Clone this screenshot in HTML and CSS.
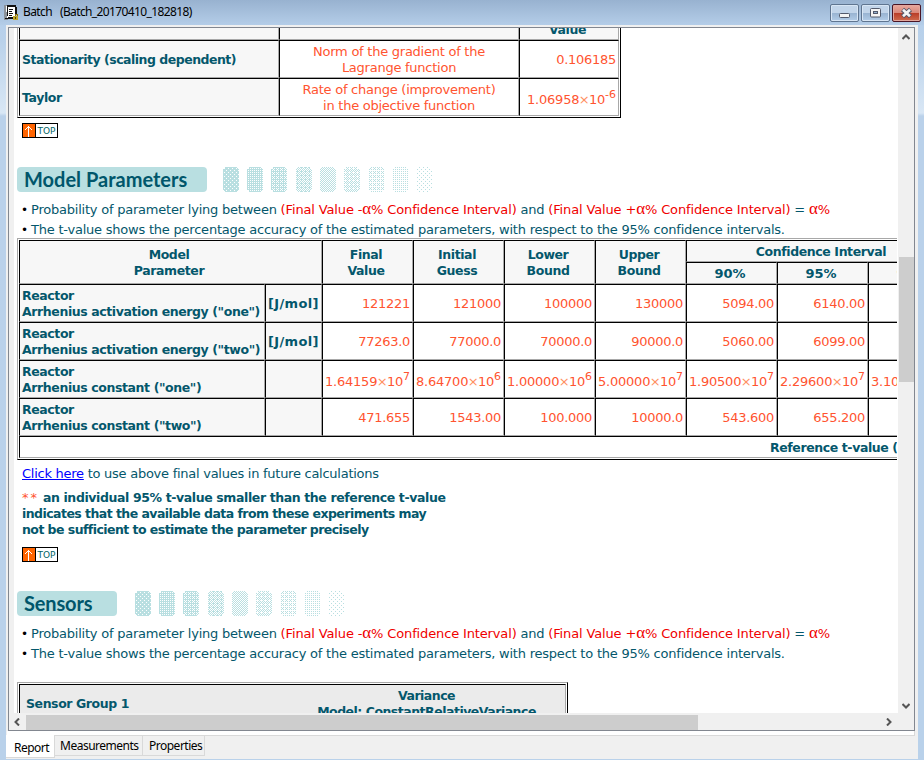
FILE: index.html
```html
<!DOCTYPE html>
<html lang="en">
<head>
<meta charset="utf-8">
<title>Batch (Batch_20170410_182818)</title>
<link rel="stylesheet" href="styles.css">
</head>
<body>
<div class="window">
  <header class="titlebar">
    <svg class="app-icon" width="16" height="16" viewBox="0 0 16 16" shape-rendering="crispEdges"><path d="M0 0h4v15H0z" fill="#8b929a"/><path d="M2 1h9v12H3z" fill="#fff"/><path d="M3 0h9v2h1v8h-2V2H4v9H3zM4 12h6v2H1v-1h3z" fill="#111"/><path d="M5 4h4v1H5zM5 6h3v1H5zM5 8h4v1H5zM5 10h3v1H5z" fill="#111"/><path d="M11 9h3v2h-1v-1h-1v1h-1z" fill="#876c0c"/><path d="M9 11h5v4H9z" fill="#bda52a"/><path d="M11 12h1v2h-1z" fill="#554700"/></svg>
    <span class="title"><span>Batch</span><span class="file">(Batch_20170410_182818)</span></span>
    <div class="buttons">
      <span class="btn"><svg width="27" height="16" viewBox="0 0 27 16"><rect x="8.5" y="8.5" width="10" height="4" rx="1" fill="#f4f4f4" stroke="#535a6b"/></svg></span>
      <span class="btn"><svg width="27" height="16" viewBox="0 0 27 16"><rect x="8.5" y="3.5" width="10" height="8.500" rx="1" fill="#f4f4f4" stroke="#535a6b"/><rect x="11.500" y="6.500" width="4" height="2" fill="#92afd0" stroke="#535a6b"/></svg></span>
      <span class="btn close"><svg width="27" height="16" viewBox="0 0 27 16"><path d="M9.500 4.500L17.500 11.500M17.500 4.500L9.500 11.500" stroke="#55576a" stroke-width="4.600"/><path d="M10 4.700L17 11.300M17 4.700L10 11.300" stroke="#f4f4f4" stroke-width="2.600"/></svg></span>
    </div>
  </header>
  <div class="client">
    <div class="frame">
      <main class="page">
        <table class="grid top-table">
          <colgroup><col class="w260"><col class="w240"><col class="w100"></colgroup>
          <tr class="r38"><th></th><th></th><th class="cut">Value</th></tr>
          <tr class="r38"><th class="l tight">Stationarity (scaling dependent)</th><td class="c">Norm of the gradient of the<br>Lagrange function</td><td>0.106185</td></tr>
          <tr class="r38"><th class="l">Taylor</th><td class="c">Rate of change (improvement)<br>in the objective function</td><td class="sci">1.06958<i>×</i>10<sup>-6</sup></td></tr>
        </table>
        <div class="top-link"><span class="arrow"><svg width="12" height="15" viewBox="0 0 12 15" shape-rendering="crispEdges"><path d="M6 3h1v11H6zM5 4h3v1H5zM4 5h1v1H4zM8 5h1v1H8zM3 6h1v1H3zM9 6h1v1H9z" fill="#fff"/><path d="M6 14h1v1H6z" fill="#000"/></svg></span><span class="word">TOP</span></div>

        <div class="heading h-model"><h2>Model Parameters</h2><div class="dots"></div></div>
        <p class="bullet"><b>•</b><span>Probability of parameter lying between </span><span class="red">(Final Value -<em>α</em>% Confidence Interval)</span><span> and </span><span class="red">(Final Value +<em>α</em>% Confidence Interval)</span><span> = </span><span class="red"><em>α</em>%</span></p>
        <p class="bullet"><b>•</b><span>The t-value shows the percentage accuracy of the estimated parameters, with respect to the 95% confidence intervals.</span></p>

        <table class="grid params">
          <colgroup><col class="w246"><col class="w57"><col class="w91"><col class="w91"><col class="w91"><col class="w91"><col class="w91"><col class="w91"><col class="w91"></colgroup>
          <tr class="r22"><th colspan="2" rowspan="2">Model<br>Parameter</th><th rowspan="2">Final<br>Value</th><th rowspan="2">Initial<br>Guess</th><th rowspan="2">Lower<br>Bound</th><th rowspan="2">Upper<br>Bound</th><th colspan="3">Confidence Interval</th></tr>
          <tr class="r22"><th class="wide">90%</th><th class="wide">95%</th><th class="wide">99%</th></tr>
          <tr class="r38"><th class="l">Reactor<br>Arrhenius activation energy ("one")</th><th class="l unit">[J/mol]</th><td>121221</td><td>121000</td><td>100000</td><td>130000</td><td>5094.00</td><td>6140.00</td><td>8290.00</td></tr>
          <tr class="r38"><th class="l">Reactor<br>Arrhenius activation energy ("two")</th><th class="l unit">[J/mol]</th><td>77263.0</td><td>77000.0</td><td>70000.0</td><td>90000.0</td><td>5060.00</td><td>6099.00</td><td>8230.00</td></tr>
          <tr class="r38"><th class="l">Reactor<br>Arrhenius constant ("one")</th><th></th><td class="sci">1.64159<i>×</i>10<sup>7</sup></td><td class="sci">8.64700<i>×</i>10<sup>6</sup></td><td class="sci">1.00000<i>×</i>10<sup>6</sup></td><td class="sci">5.00000<i>×</i>10<sup>7</sup></td><td class="sci">1.90500<i>×</i>10<sup>7</sup></td><td class="sci">2.29600<i>×</i>10<sup>7</sup></td><td class="sci">3.10000<i>×</i>10<sup>7</sup></td></tr>
          <tr class="r38"><th class="l">Reactor<br>Arrhenius constant ("two")</th><th></th><td>471.655</td><td>1543.00</td><td>100.000</td><td>10000.0</td><td>543.600</td><td>655.200</td><td>884.000</td></tr>
          <tr class="r22"><th colspan="9" class="ref">Reference t-value (95%):</th></tr>
        </table>
        <p class="click"><a href="#">Click here</a> to use above final values in future calculations</p>
        <p class="note"><span class="star">**</span><span class="first"> an individual 95% t-value smaller than the reference t-value</span><br>indicates that the available data from these experiments may<br>not be sufficient to estimate the parameter precisely</p>
        <div class="top-link"><span class="arrow"><svg width="12" height="15" viewBox="0 0 12 15" shape-rendering="crispEdges"><path d="M6 3h1v11H6zM5 4h3v1H5zM4 5h1v1H4zM8 5h1v1H8zM3 6h1v1H3zM9 6h1v1H9z" fill="#fff"/><path d="M6 14h1v1H6z" fill="#000"/></svg></span><span class="word">TOP</span></div>

        <div class="heading h-sensors"><h2>Sensors</h2><div class="dots"></div></div>
        <p class="bullet"><b>•</b><span>Probability of parameter lying between </span><span class="red">(Final Value -<em>α</em>% Confidence Interval)</span><span> and </span><span class="red">(Final Value +<em>α</em>% Confidence Interval)</span><span> = </span><span class="red"><em>α</em>%</span></p>
        <p class="bullet"><b>•</b><span>The t-value shows the percentage accuracy of the estimated parameters, with respect to the 95% confidence intervals.</span></p>
        <section class="group"><div class="group-in"><strong>Sensor Group 1</strong><strong class="var">Variance<br>Model: ConstantRelativeVariance</strong></div></section>
      </main>
      <div class="vscroll">
        <svg width="8" height="6" viewBox="0 0 8 6"><path d="M.5 5L4 1.500L7.500 5" fill="none" stroke="#555" stroke-width="2"/></svg>
        <div class="vthumb"></div>
        <svg width="8" height="6" viewBox="0 0 8 6"><path d="M.5 1L4 4.500L7.500 1" fill="none" stroke="#555" stroke-width="2"/></svg>
      </div>
      <div class="hscroll">
        <svg width="6" height="8" viewBox="0 0 6 8"><path d="M5 .5L1.500 4L5 7.500" fill="none" stroke="#555" stroke-width="2"/></svg>
        <div class="hthumb"></div>
        <svg width="6" height="8" viewBox="0 0 6 8"><path d="M1 .5L4.500 4L1 7.500" fill="none" stroke="#555" stroke-width="2"/></svg>
      </div>
    </div>
    <div class="edge"></div>
    <nav class="tabs"><span class="tab on">Report</span><span class="tab m">Measurements</span><span class="tab p">Properties</span></nav>
  </div>
</div>
<script src="page.js"></script>
</body>
</html>
```
FILE: styles.css
```css
* { box-sizing: border-box; }
html, body { margin: 0; }
body { width: 924px; height: 760px; overflow: hidden; font: 13px/16px "DejaVu Sans", sans-serif; letter-spacing: -.22px; color: #04576c; }
.window { width: 924px; height: 760px; padding: 0 6px 1px; background: linear-gradient(#97b1d0 0, #b7d0eb 26px, #b9d1ea 40px, #d9e7f5 113px, #bad1ea 116px, #b9d1ea); }
.titlebar { height: 25px; margin: 0 -6px; padding: 4px 3px 0 4px; display: flex; background: linear-gradient(#98b2d0, #b4cde8); }
.app-icon { flex: none; margin-top: 1px; }
.title { flex: 1; margin-left: 3px; font: 12px/16px "Noto Sans", sans-serif; letter-spacing: -.62px; color: #000; }
.title .file { margin-left: 8px; }
.buttons { display: flex; gap: 2px; }
.btn { width: 29px; height: 18px; border: 1px solid #5f7590; border-radius: 2px; box-shadow: inset 0 0 0 1px #d8e6f5; background: linear-gradient(#c2d5ea 0 48%, #98b3d1 50%, #b3cde8); }
.btn svg { display: block; }
.btn.close { border-color: #4a1525; box-shadow: inset 0 0 0 1px #e3a79d; background: linear-gradient(#eaa99e, #d9887a 48%, #b93c27 50%, #cf6b4d); }
.client { height: 734px; background: #f0f0f0; padding: 2px 2px 0; }
.frame { width: 907px; height: 704px; border: 1px solid #828790; display: grid; grid-template: 686px 16px / 889px 16px; background: #f0f0f0; }
.page { margin-left: 5px; width: 884px; height: 685px; padding-left: 3px; border-right: 1px solid #fff; background: #fff; overflow: hidden; }
.grid { border-collapse: separate; border-spacing: 0; table-layout: fixed; border: 1px solid; border-color: #a8a8a8 #000 #000 #a8a8a8; padding: 1px; }
.top-table { width: 604px; margin-top: -28px; }
.params { width: 944px; }
.w260 { width: 260px; } .w240 { width: 240px; } .w100 { width: 100px; }
.w246 { width: 246px; } .w57 { width: 57px; } .w91 { width: 91px; }
.grid th, .grid td { padding: 2px 2px 0; border: 1px solid; border-color: #000 #a8a8a8 #a8a8a8 #000; white-space: nowrap; }
.grid th { padding-right: 5px; background: #f7f7f7; font-size: 12.5px; letter-spacing: -.4px; }
.grid td { color: #ff5430; text-align: right; letter-spacing: -.27px; }
.grid .l { padding-right: 0; text-align: left; }
.grid .tight { letter-spacing: -.5px; }
.grid .wide { font-size: 13px; letter-spacing: 0; }
.grid .unit { font-size: 13px; letter-spacing: .35px; }
.grid .c { text-align: center; letter-spacing: -.25px; }
.r38 { height: 38px; } .r22 { height: 22px; }
.grid th.cut { vertical-align: bottom; padding-bottom: 1px; }
.grid .sci { padding: 5px 2px 0 0; letter-spacing: -.22px; }
.sci i { font-style: normal; color: #ff9060; margin: 0 -.5px; }
.sci sup { font-size: 11px; line-height: 0; vertical-align: 6px; letter-spacing: 0; }
.grid th.ref { background: #fff; text-align: left; padding-left: 750px; }
.top-link { width: 36px; height: 15px; margin: 5px 0 0 5px; display: flex; border: 1px solid #000; background: #fff; }
.arrow { width: 13px; background: #ff6400; border-right: 1px solid #000; height: 13px; }
.arrow svg { display: block; margin: -1px 0 0 -1px; overflow: visible; }
.word { flex: 1; text-align: center; font: 9px/14px "DejaVu Sans", sans-serif; letter-spacing: 0; color: #006464; }
.heading { display: flex; height: 25px; margin: 29px 0 6px; }
.heading h2 { margin: 0; padding-left: 7px; border-radius: 4px; background: #b9dfe1; color: #00566b; font: bold 20px/25px Lato, sans-serif; letter-spacing: 0; }
.h-model h2 { width: 190px; margin-right: 16px; }
.h-sensors h2 { width: 100px; margin-right: 18px; letter-spacing: -.15px; }
.dots { display: flex; gap: 8px; }
.dots svg { display: block; }
.dots svg:nth-child(3n+4) { margin-left: 1px; }
.bullet { margin: 0; height: 20px; line-height: 20px; padding: 2px 0 0 4px; white-space: pre; display: flex; }
.bullet b { width: 10px; color: #000; font-size: 12px; font-weight: normal; }
.bullet em { font: 17px/16px "Liberation Serif", serif; }
.red { color: #f00000; letter-spacing: -.14px; }
.click { margin: 6px 0 0 5px; letter-spacing: -.26px; }
.click a { color: #00f; }
.note { margin: 8px 0 9px 5px; font-size: 12.5px; font-weight: bold; letter-spacing: -.55px; white-space: nowrap; }
.note .first { letter-spacing: -.39px; }
.star { color: #ff5430; font-size: 13px; font-weight: normal; letter-spacing: 2px; }
.group { margin-top: 20px; width: 551px; height: 60px; padding: 1px; border: 1px solid; border-color: #a8a8a8 #000 #000 #a8a8a8; }
.group-in { height: 56px; padding-left: 6px; background: #ebebeb; border: 1px solid; border-color: #000 #a8a8a8 #a8a8a8 #000; display: flex; font-size: 12.5px; letter-spacing: -.42px; }
.group strong { width: 263px; padding-top: 11px; white-space: nowrap; }
.group .var { width: 278px; padding-top: 3px; text-align: center; letter-spacing: -.5px; }
.vscroll { height: 686px; display: flex; flex-direction: column; align-items: center; padding: 6px 0 5px; }
.vthumb { width: 15px; height: 125px; margin: 217px 0 auto; background: #cdcdcd; }
.hscroll { grid-column: 1 / 3; height: 16px; display: flex; align-items: center; padding: 0 22px 0 5px; }
.hthumb { width: 672px; height: 15px; margin: 0 auto 0 6px; background: #cdcdcd; }
.edge { height: 5px; margin: 0 1px 0 -1px; background: #fff; border: 1px solid #d9d9d9; border-width: 0 1px 1px 0; }
.tabs { margin: 0 -2px; height: 23px; display: flex; font: 12px/20px "Noto Sans", sans-serif; letter-spacing: -.5px; color: #000; }
.tab { height: 21px; margin-top: -1px; border: 1px solid #d9d9d9; border-left: 0; padding-left: 5px; white-space: nowrap; }
.tab.on { width: 49px; height: 23px; background: #fff; padding: 3px 0 0 8px; border-top: 0; }
.tab.m { width: 88px; }
.tab.p { width: 62px; padding-left: 6px; }
```
FILE: page.js
```js
// Dot-pattern fade beside each section heading: one tile per density step.
const tests = [
  (x, y) => !((x % 4 === 1 && y % 4 === 1) || (x % 4 === 3 && y % 4 === 3)),
  (x, y) => !(x % 2 === 1 && y % 2 === 1),
  (x, y) => !(x % 2 === 1 && y % 2 === 1) && !(x % 4 === 2 && y % 4 === 2),
  (x, y) => (x + y) % 2 === 0 || (x % 4 === 1 && y % 4 === 0),
  (x, y) => (x + y) % 2 === 0,
  (x, y) => (x + y) % 2 === 0 && !(x % 4 === 1 && y % 4 === 1),
  (x, y) => (x % 2 === 0 && y % 2 === 0) || (x % 4 === 1 && y % 4 === 1),
  (x, y) => x % 2 === 0 && y % 2 === 0,
  (x, y) => (x % 4 === 0 && y % 4 === 2) || (x % 4 === 2 && y % 4 === 0)
];
for (const box of document.querySelectorAll('.dots')) {
  for (const on of tests) {
    let d = '';
    for (let y = 0; y < 25; y++) for (let x = 0; x < 16; x++) {
      const e = Math.min(x, 15 - x) + Math.min(y, 24 - y);
      if (e > 1 && on(x, y)) d += `M${x} ${y}h1v1h-1z`;
    }
    box.insertAdjacentHTML('beforeend', `<svg width="16" height="25" shape-rendering="crispEdges"><path d="${d}" fill="#b9dfe1"/></svg>`);
  }
}
```
